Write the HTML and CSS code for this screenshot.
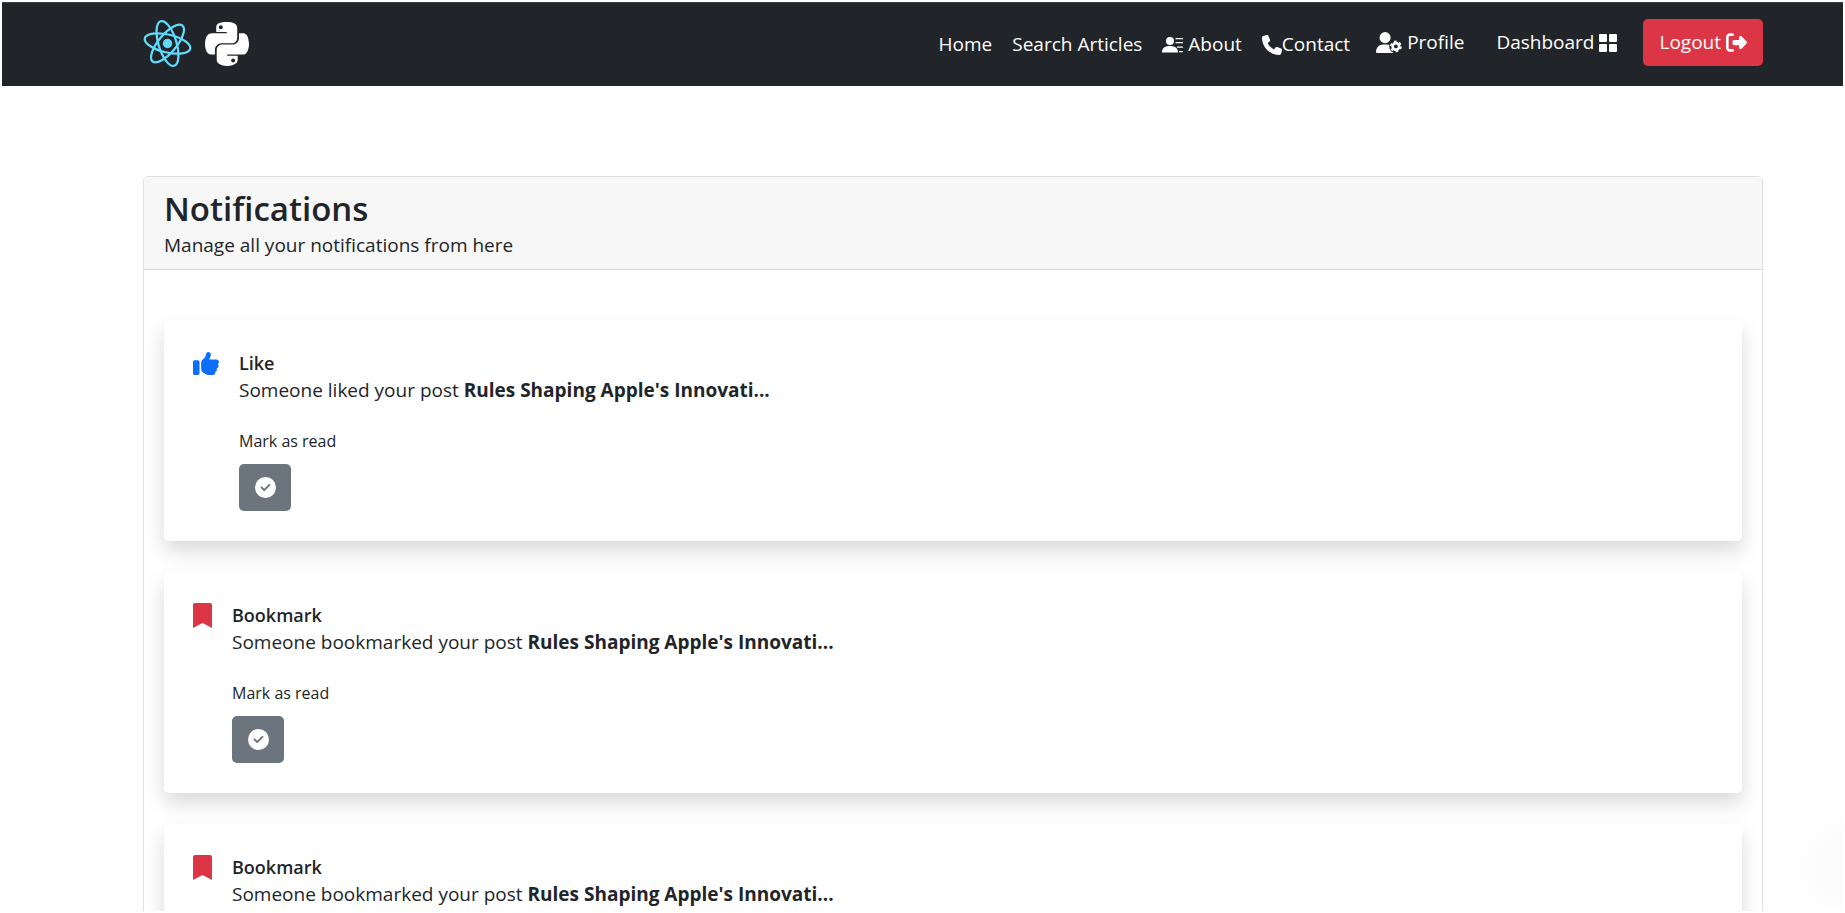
FILE: index.html
```html
<!DOCTYPE html>
<html lang="en">
<head>
<meta charset="utf-8">
<title>Notifications</title>
<link rel="stylesheet" href="styles.css">
</head>
<body>
<svg class="sprite" aria-hidden="true">
  <symbol id="check" viewBox="0 0 512 512"><path d="M256 512A256 256 0 1 0 256 0a256 256 0 1 0 0 512zM369 209L241 337c-9.400 9.400-24.600 9.400-33.900 0l-64-64c-9.400-9.400-9.400-24.600 0-33.900s24.600-9.400 33.900 0l47 47L335 175c9.400-9.400 24.600-9.400 33.900 0s9.400 24.600 0 33.900z"/></symbol>
  <symbol id="bookmark" viewBox="0 0 19 25"><path d="M0 2Q0 0 2 0H17Q19 0 19 2V25L9.500 20 0 25z"/></symbol>
  <symbol id="like" viewBox="0 32 512 448"><path d="M313.400 32.900c26 5.200 42.900 30.500 37.700 56.500l-2.300 11.400c-5.300 26.700-15.100 52.100-28.800 75.200H464c26.500 0 48 21.500 48 48c0 18.500-10.500 34.600-25.900 42.600C497 275.400 504 288.900 504 304c0 23.400-16.800 42.900-38.900 47.100c4.400 7.300 6.900 15.800 6.900 24.900c0 21.300-13.900 39.400-33.100 45.600c.7 3.300 1.100 6.800 1.100 10.400c0 26.500-21.500 48-48 48H294.500c-19 0-37.500-5.600-53.300-16.100l-38.500-25.700C176 420.400 160 390.400 160 358.300V247.100c0-29.200 13.300-56.700 36-75l7.400-5.900c26.500-21.200 44.600-51 51.200-84.200l2.300-11.400c5.200-26 30.500-42.900 56.500-37.700zM32 192H96c17.700 0 32 14.300 32 32V448c0 17.700-14.300 32-32 32H32c-17.700 0-32-14.300-32-32V224c0-17.700 14.300-32 32-32z"/></symbol>
</svg>
<header class="navbar">
  <div class="container navbar-inner">
    <a class="brand" href="#" aria-label="Home page">
      <svg class="logo-react" viewBox="-12 -12 24 24" fill="none" stroke="#61dafb" stroke-width="1.100" aria-hidden="true">
        <circle r="2.300" fill="#61dafb" stroke="none"/>
        <ellipse rx="11.400" ry="4.400" transform="rotate(13)"/>
        <ellipse rx="11.400" ry="4.400" transform="rotate(73)"/>
        <ellipse rx="11.400" ry="4.400" transform="rotate(130)"/>
      </svg>
      <svg class="logo-python" viewBox="0 32 448 448" fill="#fff" aria-hidden="true"><path d="M439.800 200.500c-7.700-30.900-22.300-54.200-53.400-54.200h-40.100v47.400c0 36.800-31.200 67.800-66.800 67.800H172.700c-29.200 0-53.400 25-53.400 54.300v101.800c0 29 25.200 46 53.400 54.300 33.800 9.900 66.300 11.700 106.800 0 26.900-7.800 53.400-23.500 53.400-54.300v-40.700H226.200v-13.600h160.200c31.100 0 42.600-21.700 53.400-54.200 11.200-33.500 10.700-65.700 0-108.600zM286.200 404c11.100 0 20.100 9.100 20.100 20.300 0 11.300-9 20.400-20.100 20.400-11 0-20.100-9.200-20.100-20.400.1-11.300 9.100-20.300 20.100-20.300zM167.800 248.100h106.800c29.700 0 53.400-24.500 53.400-54.300V91.900c0-29-24.400-50.700-53.400-55.600-35.800-5.900-74.700-5.600-106.800.1-45.200 8-53.400 24.700-53.400 55.600v40.700h106.900v13.600h-147c-31.100 0-58.300 18.700-66.800 54.200-9.800 40.700-10.200 66.100 0 108.600 7.600 31.600 25.700 54.200 56.800 54.200H101v-48.800c0-35.300 30.500-66.400 66.800-66.400zm-6.700-142.600c-11.100 0-20.100-9.100-20.100-20.300.1-11.300 9-20.400 20.100-20.400 11 0 20.100 9.200 20.100 20.400s-9 20.300-20.100 20.300z"/></svg>
    </a>
    <nav class="menu">
      <div class="menu-links">
        <a href="#">Home</a>
        <a href="#">Search Articles</a>
        <a class="spaced" href="#"><svg class="icon-about" viewBox="0 0 21 16" fill="currentColor" aria-hidden="true"><circle cx="8" cy="4" r="4"/><path d="M0 15.500C0 11 3 9 8 9s8 2 8 6.500zM13.500 1H21v1.300h-7.500zM13.500 5H21v1.300h-7.500zM15 9.500h6v1.300h-6zM17 14h4v1.300h-4z"/></svg>About</a>
        <a href="#"><svg class="icon-phone" viewBox="0 0 512 512" fill="currentColor" aria-hidden="true"><path d="M164.900 24.600c-7.700-18.600-28-28.500-47.400-23.200l-88 24C12.100 30.200 0 46 0 64C0 311.400 200.600 512 448 512c18 0 33.800-12.100 38.600-29.500l24-88c5.300-19.400-4.600-39.700-23.200-47.400l-96-40c-16.300-6.800-35.200-2.100-46.300 11.600L304.700 368C234.300 334.700 177.300 277.700 144 207.300L193.300 167c13.700-11.200 18.400-30 11.600-46.300l-40-96z"/></svg>Contact</a>
      </div>
      <a class="wide spaced" href="#"><svg class="icon-profile" viewBox="0 0 640 512" fill="currentColor" aria-hidden="true">
        <circle cx="224" cy="136" r="136"/>
        <path d="M178 304H270C368 304 440 384 440 482C440 499 427 512 410 512H30C13 512 0 499 0 482C0 384 80 304 178 304z"/>
        <circle class="gear-gap" cx="490" cy="352" r="165"/>
        <g fill="none" stroke="currentColor"><circle cx="490" cy="352" r="80" stroke-width="66"/><circle cx="490" cy="352" r="125" stroke-width="40" stroke-dasharray="66 65"/></g>
      </svg>Profile</a>
      <a class="wide spaced" href="#">Dashboard<svg class="icon-grid" viewBox="0 0 18 18" fill="currentColor" aria-hidden="true"><rect width="8" height="8" rx="1"/><rect x="10" width="8" height="8" rx="1"/><rect y="10" width="8" height="8" rx="1"/><rect x="10" y="10" width="8" height="8" rx="1"/></svg></a>
      <a class="logout spaced" href="#">Logout<svg class="icon-logout" viewBox="0 0 512 512" fill="currentColor" aria-hidden="true"><path d="M377.900 105.900L500.700 228.700c7.200 7.200 11.300 17.100 11.300 27.300s-4.100 20.100-11.300 27.300L377.900 406.100c-6.400 6.400-15 9.900-24 9.900c-18.700 0-33.900-15.200-33.900-33.900V320H192c-17.700 0-32-14.300-32-32V224c0-17.700 14.300-32 32-32H320V129.900c0-18.700 15.200-33.900 33.900-33.900c9 0 17.600 3.600 24 9.900zM160 96H96c-17.700 0-32 14.300-32 32V384c0 17.700 14.300 32 32 32h64c17.700 0 32 14.300 32 32s-14.300 32-32 32H96c-53 0-96-43-96-96V128C0 75 43 32 96 32h64c17.700 0 32 14.300 32 32s-14.300 32-32 32z"/></svg></a>
    </nav>
  </div>
</header>
<main class="container">
  <section class="card">
    <div class="card-header">
      <h1>Notifications</h1>
      <p>Manage all your notifications from here</p>
    </div>
    <ul class="list">
      <li class="item">
        <svg class="icon-like" aria-hidden="true"><use href="#like"/></svg>
        <div class="item-body">
          <h2>Like</h2>
          <p>Someone liked your post <strong>Rules Shaping Apple's Innovati...</strong></p>
          <label class="mark" for="read-1">Mark as read</label>
          <button class="read" id="read-1" type="button"><svg aria-hidden="true"><use href="#check"/></svg></button>
        </div>
      </li>
      <li class="item">
        <svg class="icon-bookmark" aria-hidden="true"><use href="#bookmark"/></svg>
        <div class="item-body">
          <h2>Bookmark</h2>
          <p>Someone bookmarked your post <strong>Rules Shaping Apple's Innovati...</strong></p>
          <label class="mark" for="read-2">Mark as read</label>
          <button class="read" id="read-2" type="button"><svg aria-hidden="true"><use href="#check"/></svg></button>
        </div>
      </li>
      <li class="item">
        <svg class="icon-bookmark" aria-hidden="true"><use href="#bookmark"/></svg>
        <div class="item-body">
          <h2>Bookmark</h2>
          <p>Someone bookmarked your post <strong>Rules Shaping Apple's Innovati...</strong></p>
          <label class="mark" for="read-3">Mark as read</label>
          <button class="read" id="read-3" type="button"><svg aria-hidden="true"><use href="#check"/></svg></button>
        </div>
      </li>
    </ul>
  </section>
</main>
<div class="corner-glow"></div>
</body>
</html>
```

FILE: styles.css
```css
* { box-sizing: border-box; }
html { height: 100%; overflow: hidden; }
body {
  height: 100%;
  margin: 0;
  overflow: hidden;
  border: 2px solid #fff;
  background: #fff;
  color: #212529;
  font-family: "Segoe UI", "Open Sans", "Noto Sans", sans-serif;
  font-size: 19px;
  line-height: 27px;
}
h1, h2, p, ul { margin: 0; padding: 0; }
a { color: inherit; text-decoration: none; }
svg { flex: none; display: block; }
.sprite { position: absolute; width: 0; height: 0; }

.container { max-width: 1650px; margin: 0 80px 0 141px; }

.navbar { background: #212529; border-top: 1px solid #3b3f43; color: #fff; }
.navbar-inner { display: flex; align-items: center; justify-content: space-between; height: 83px; padding-bottom: 2px; }
.brand { display: flex; align-items: center; gap: 13px; }
.logo-react { width: 49px; height: 49px; }
.logo-python { width: 44px; height: 44px; }
.menu, .menu-links { display: flex; align-items: center; gap: 20px; }
.menu { padding-bottom: 2px; }
.menu-links { padding-top: 4px; }
.menu a { display: flex; align-items: center; white-space: nowrap; }
.menu .spaced { gap: 5px; }
.menu .wide { margin: 0 6px; }
.icon-about { width: 21px; height: 16px; }
.icon-phone { width: 20px; height: 20px; }
.icon-profile { width: 26px; height: 21px; }
.gear-gap { fill: #212529; }
.icon-grid { width: 18px; height: 18px; }
.icon-logout { width: 21px; height: 21px; }
.menu .logout { height: 47px; padding: 0 16px; border-radius: 5px; background: #dc3545; }

.card { margin-top: 90px; border: 1px solid #dedfe0; border-radius: 5px; }
.card-header { padding: 10px 20px; background: #f7f7f7; border-bottom: 1px solid #d6d8d9; }
.card-header h1 { font-size: 33px; line-height: 44px; font-weight: 600; }
.card-header p { line-height: 28px; }
.list { list-style: none; padding: 50px 20px; display: grid; gap: 31px; }
.item {
  display: flex;
  align-items: flex-start;
  gap: 20px;
  padding: 30px 29px;
  border-radius: 5px;
  background: #fff;
  box-shadow: 0 10px 20px rgba(0, 0, 0, 0.15);
}
.item h2 { font-size: 18px; line-height: 27px; font-weight: 600; }
.item-body { display: flex; flex-direction: column; align-items: flex-start; }
.icon-like { width: 26px; height: 23px; margin-top: 2px; fill: #0d6efd; }
.icon-bookmark { width: 19px; height: 25px; margin-top: 1px; fill: #dc3545; }
.mark { margin-top: 24px; font-size: 16px; line-height: 26px; }
.read {
  display: flex;
  align-items: center;
  justify-content: center;
  width: 52px;
  height: 47px;
  margin-top: 10px;
  border: 0;
  border-radius: 5px;
  background: #6c757d;
  fill: #fff;
}
.read svg { width: 21px; height: 21px; }
.corner-glow {
  position: fixed;
  right: 2px;
  bottom: 2px;
  width: 50px;
  height: 100px;
  background: radial-gradient(ellipse at 100% 55%, #fafafa, #fff 80%);
}
```
